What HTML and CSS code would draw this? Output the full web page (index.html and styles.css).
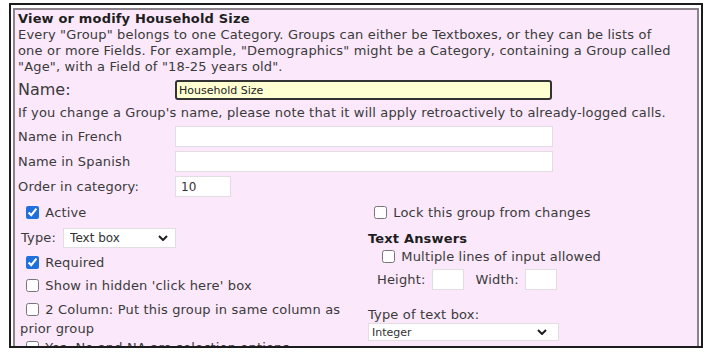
FILE: index.html
```html
<!DOCTYPE html>
<html lang="en">
<head>
    <meta charset="UTF-8">
    <meta name="viewport" content="width=device-width, initial-scale=1.0">
    <title>Edit Group - Household Size</title>
    <link rel="stylesheet" href="styles.css">
</head>
<body>
    <div class="frame">
        <div class="panel">
            <div class="title">View or modify Household Size</div>
            <p class="intro">Every "Group" belongs to one Category. Groups can either be Textboxes, or they can be lists of one or more Fields. For example, "Demographics" might be a Category, containing a Group called "Age", with a Field of "18-25 years old".</p>

            <div class="name-row">
                <label for="groupName" class="name-label">Name:</label>
                <input type="text" id="groupName" class="name-input" value="Household Size">
            </div>
            <p class="note">If you change a Group's name, please note that it will apply retroactively to already-logged calls.</p>

            <div class="field-row">
                <label for="nameFrench">Name in French</label>
                <input type="text" id="nameFrench" class="wide">
            </div>
            <div class="field-row">
                <label for="nameSpanish">Name in Spanish</label>
                <input type="text" id="nameSpanish" class="wide">
            </div>
            <div class="field-row">
                <label for="orderCat">Order in category:</label>
                <input type="text" id="orderCat" class="short" value="10">
            </div>

            <div class="columns">
                <div class="col-left">
                    <label class="check"><input type="checkbox" checked> Active</label>
                    <div class="type-row">
                        <label for="groupType">Type:</label>
                        <div class="select-wrap type-select">
                            <select id="groupType">
                                <option>Text box</option>
                                <option>List of fields</option>
                            </select>
                            <svg class="chevron" viewBox="0 0 10 6"><path d="M1 1l4 4 4-4" /></svg>
                        </div>
                    </div>
                    <label class="check"><input type="checkbox" checked> Required</label>
                    <label class="check"><input type="checkbox"> Show in hidden 'click here' box</label>
                    <label class="check"><input type="checkbox"> 2 Column: Put this group in same column as prior group</label>
                    <label class="check"><input type="checkbox"> Yes, No and NA are selection options</label>
                </div>

                <div class="col-right">
                    <label class="check"><input type="checkbox"> Lock this group from changes</label>
                    <div class="sub-title">Text Answers</div>
                    <label class="check indent"><input type="checkbox"> Multiple lines of input allowed</label>
                    <div class="size-row">
                        <label for="boxHeight">Height:</label>
                        <input type="text" id="boxHeight" class="tiny">
                        <label for="boxWidth">Width:</label>
                        <input type="text" id="boxWidth" class="tiny">
                    </div>
                    <label for="boxKind" class="kind-label">Type of text box:</label>
                    <div class="select-wrap kind-select">
                        <select id="boxKind">
                            <option>Integer</option>
                            <option>Decimal</option>
                            <option>Text</option>
                        </select>
                        <svg class="chevron" viewBox="0 0 10 6"><path d="M1 1l4 4 4-4" /></svg>
                    </div>
                </div>
            </div>
        </div>
    </div>
</body>
</html>
```

FILE: styles.css
```css
body {
    margin: 0;
    background: #fff;
    font-family: "DejaVu Sans", Verdana, sans-serif;
    font-size: 13px;
    letter-spacing: 0.17px;
    color: #3a3a3a;
}
.frame {
    margin: 3px 0 0 9px;
    width: 694px;
    height: 345px;
    box-sizing: border-box;
    border: 2px solid #1c1c1c;
    padding: 3px 2px 0 2px;
    overflow: hidden;
}
.panel {
    background: #fbe8fa;
    border: 2px solid #8a848a;
    border-bottom: none;
    padding: 1px 10px 30px 3px;
    line-height: 16px;
}
.title {
    font-weight: bold;
    color: #1e1e1e;
}
.intro {
    margin: 0;
    padding-right: 12px;
}
.name-row {
    display: flex;
    align-items: center;
    margin-top: 4px;
    height: 22px;
}
.name-label {
    width: 157px;
    font-size: 16px;
    letter-spacing: 0;
}
.name-input {
    width: 377px;
    height: 20px;
    box-sizing: border-box;
    border: 2px solid #333;
    border-radius: 3px;
    background: #ffffd2;
    font-family: "DejaVu Sans", Verdana, sans-serif;
    font-size: 11px;
    color: #222;
    padding: 0 2px;
}
.note {
    margin: 4px 0 5px;
}
.field-row {
    display: flex;
    align-items: center;
    height: 21px;
    margin-bottom: 4px;
}
.field-row label {
    width: 157px;
}
.field-row input, .tiny {
    height: 21px;
    box-sizing: border-box;
    border: 1px solid #e2dde2;
    background: #fff;
    font-family: "DejaVu Sans", Verdana, sans-serif;
    font-size: 12px;
    color: #333;
    padding: 0 5px;
}
.wide {
    width: 378px;
}
.short {
    width: 56px;
}
.columns {
    display: grid;
    grid-template-columns: 350px 1fr;
    margin-top: 8px;
}
.col-left {
    padding-left: 2px;
}
.check {
    display: block;
    margin-bottom: 7px;
}
.check input {
    width: 13px;
    height: 13px;
    margin: 0 2px 0 6px;
    vertical-align: -2px;
    accent-color: #1f6fdc;
}
.col-left .check:nth-child(3) {
    margin-top: 7px;
}
.col-left .check:nth-child(4) {
    margin-bottom: 6px;
}
.col-left .check:nth-child(5) {
    line-height: 19px;
    margin-bottom: 2px;
}
.type-row {
    display: flex;
    align-items: center;
    gap: 7px;
    margin: 2px 0 0 1px;
}
.select-wrap {
    position: relative;
    background: #fff;
    border: 1px solid #e2dde2;
    box-sizing: border-box;
}
.select-wrap select {
    appearance: none;
    border: none;
    background: transparent;
    width: 100%;
    height: 100%;
    font-family: "DejaVu Sans", Verdana, sans-serif;
    font-size: 12px;
    color: #333;
    padding: 0 6px;
    outline: none;
}
.chevron {
    position: absolute;
    top: 50%;
    width: 10px;
    height: 6px;
    margin-top: -3px;
    fill: none;
    stroke: #1e1e1e;
    stroke-width: 2;
}
.type-select {
    width: 113px;
    height: 20px;
}
.type-select .chevron {
    right: 7px;
}
.sub-title {
    font-weight: bold;
    color: #1e1e1e;
    margin: 10px 0 2px;
}
.indent input {
    margin-left: 14px;
}
.size-row {
    display: flex;
    align-items: center;
    margin: -3px 0 0 9px;
}
.tiny {
    width: 32px;
    margin: 0 12px 0 6px;
}
.kind-label {
    display: block;
    margin-top: 17px;
}
.kind-select {
    width: 191px;
    height: 18px;
}
.kind-select select {
    font-size: 11px;
    padding: 0 3px;
}
.kind-select .chevron {
    right: 11px;
}
```
